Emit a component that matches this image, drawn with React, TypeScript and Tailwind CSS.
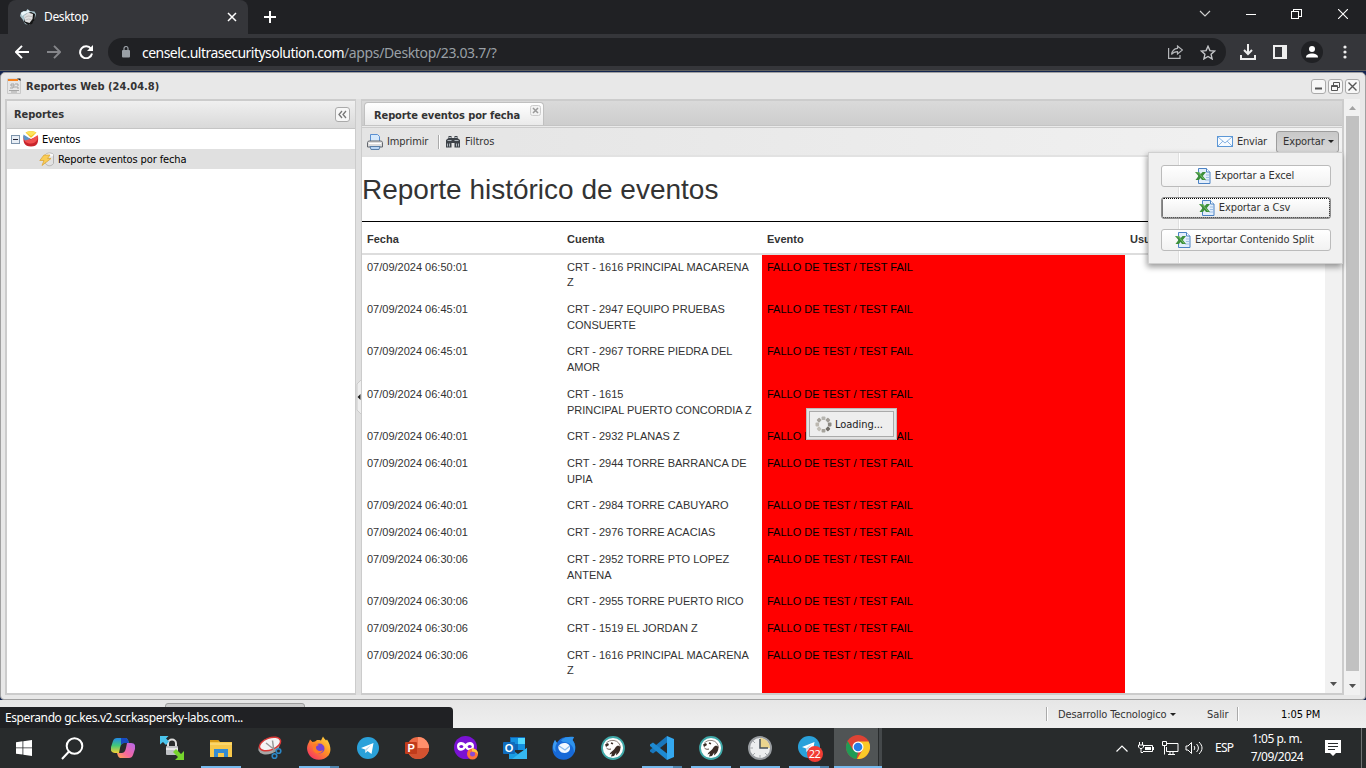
import React from "react";

type Row = { date: string; lines: string[] };

const rows: Row[] = [
  { date: "07/09/2024 06:50:01", lines: ["CRT - 1616 PRINCIPAL MACARENA", "Z"] },
  { date: "07/09/2024 06:45:01", lines: ["CRT - 2947 EQUIPO PRUEBAS", "CONSUERTE"] },
  { date: "07/09/2024 06:45:01", lines: ["CRT - 2967 TORRE PIEDRA DEL", "AMOR"] },
  { date: "07/09/2024 06:40:01", lines: ["CRT - 1615", "PRINCIPAL PUERTO CONCORDIA Z"] },
  { date: "07/09/2024 06:40:01", lines: ["CRT - 2932 PLANAS Z"] },
  { date: "07/09/2024 06:40:01", lines: ["CRT - 2944 TORRE BARRANCA DE", "UPIA"] },
  { date: "07/09/2024 06:40:01", lines: ["CRT - 2984 TORRE CABUYARO"] },
  { date: "07/09/2024 06:40:01", lines: ["CRT - 2976 TORRE ACACIAS"] },
  { date: "07/09/2024 06:30:06", lines: ["CRT - 2952 TORRE PTO LOPEZ", "ANTENA"] },
  { date: "07/09/2024 06:30:06", lines: ["CRT - 2955 TORRE PUERTO RICO"] },
  { date: "07/09/2024 06:30:06", lines: ["CRT - 1519 EL JORDAN Z"] },
  { date: "07/09/2024 06:30:06", lines: ["CRT - 1616 PRINCIPAL MACARENA", "Z"] },
];

function BrowserTabs() {
  return (
    <div className="flex h-[34px] shrink-0 bg-[#202124] text-white">
      <div className="ml-2 flex h-[34px] w-[240px] items-center rounded-t-lg bg-[#35363a] pr-[11px] pl-3">
        <svg width="16" height="16" viewBox="0 0 16 16">
          <path d="M1 3.500L3.500 2 6 2l1.500-2L10 2l4.500.5L16 5l-1 4-2 4-4 3-4-1-2-4L0 7z" fill="#a9c4cd" />
          <path d="M6 5l5-2 4 2-.5 6-2.500 4-4 1-4-3z" fill="#151515" />
          <path d="M4 7l4-3.500L13 5l-.5 5-3 4-4.500-1.500z" fill="#e0e0e0" />
          <path d="M5 8.500l3-1.500 4 .5M5.500 11l3-1 3 .5" stroke="#b4b4b4" fill="none" strokeWidth=".8" />
          <path d="M1 4l2.500-1.500 3 0L8 1l2 1.500-5 2.500L2 7z" fill="#ecf7fa" />
        </svg>
        <span className="ml-2 flex-1 text-[12px] tracking-[-0.35px]">Desktop</span>
        <svg width="10" height="10" viewBox="0 0 10 10" stroke="#fff" strokeWidth="1.500">
          <path d="M1 1l8 8M9 1l-8 8" />
        </svg>
      </div>
      <svg className="mt-[11px] ml-4" width="12" height="12" viewBox="0 0 12 12" stroke="#fff" strokeWidth="2">
        <path d="M6 0v12M0 6h12" />
      </svg>
      <div className="flex-1" />
      <svg className="mt-[10px] mr-[35px]" width="12" height="8" viewBox="0 0 12 8" fill="none" stroke="#d0d0d0" strokeWidth="1.200">
        <path d="M1 1l5 5 5-5" />
      </svg>
      <svg className="mt-[14px] mr-[35px]" width="10" height="1">
        <rect width="10" height="1" fill="#fff" />
      </svg>
      <svg className="mt-[9px] mr-9" width="11" height="10" viewBox="0 0 11 10" fill="none" stroke="#fff" shapeRendering="crispEdges">
        <path d="M.5 2.500h7v7h-7zM2.500 2.500v-2h7.500v7H8" />
      </svg>
      <svg className="mt-[9px] mr-[18px]" width="10" height="10" viewBox="0 0 10 10" stroke="#fff" strokeWidth="1.100">
        <path d="M0 0l10 10M10 0L0 10" />
      </svg>
    </div>
  );
}

function AddressBar() {
  return (
    <div className="flex h-[36px] shrink-0 items-center bg-[#35363a]">
      <svg className="ml-[15px]" width="14" height="14" viewBox="0 0 14 14" fill="none" stroke="#fff" strokeWidth="1.900">
        <path d="M14 7H1.500M7 .8L.9 7 7 13.200" />
      </svg>
      <svg className="ml-[18px]" width="14" height="14" viewBox="0 0 14 14" fill="none" stroke="#85868a" strokeWidth="1.900">
        <path d="M0 7h12.500M7 .8L13.100 7 7 13.200" />
      </svg>
      <svg className="ml-[18px]" width="14" height="14" viewBox="0 0 14 14" fill="none" stroke="#fff" strokeWidth="2">
        <path d="M12 3.800A6 6 0 1 0 13 8.500" />
        <path d="M14 0v6H8z" fill="#fff" stroke="none" />
      </svg>
      <div className="ml-[15px] flex h-7 w-[1118px] items-center rounded-full bg-[#202124] pr-[10px] pl-[14px]">
        <svg width="8" height="12" viewBox="0 0 8 12">
          <rect y="4" width="8" height="7.500" rx="1" fill="#9aa0a6" />
          <path d="M2 4V2.500a2 2 0 0 1 4 0V4" fill="none" stroke="#9aa0a6" strokeWidth="1.200" />
        </svg>
        <span className="ml-3 flex-1 text-[14px] whitespace-nowrap text-white">
          <span className="tracking-[-0.53px]">censelc.ultrasecuritysolution.com</span>
          <span className="tracking-[-0.36px] text-[#9aa0a6]">/apps/Desktop/23.03.7/?</span>
        </span>
        <svg className="mr-[17px]" width="15" height="14" viewBox="0 0 15 14" fill="none" stroke="#b4b6b9" strokeWidth="1.200">
          <path d="M.6 3v10.400h11.400V10" />
          <path d="M9.500 1l5 4-5 4V6.700C6.500 6.700 5 7.500 3.500 9.500 4 6.200 6 3.600 9.500 3.300z" />
        </svg>
        <svg width="16" height="15" viewBox="0 0 16 15" fill="none" stroke="#c4c6c9" strokeWidth="1.400">
          <path d="M8 1.300l1.900 4.300 4.700.5-3.500 3.200 1 4.600L8 11.500l-4.100 2.400 1-4.600L1.400 6.100l4.700-.5z" />
        </svg>
      </div>
      <svg className="ml-[14px]" width="16" height="16" viewBox="0 0 16 16" fill="none" stroke="#eee" strokeWidth="2">
        <path d="M8 0v10M4 6l4 4 4-4M1 11v4h14v-4" />
      </svg>
      <svg className="ml-[17px]" width="14" height="14" viewBox="0 0 14 14">
        <path d="M1 1h12v12H1z" fill="none" stroke="#eee" strokeWidth="2" />
        <path d="M9 1h4v12H9z" fill="#eee" />
      </svg>
      <svg className="ml-[14px]" width="22" height="22" viewBox="0 0 22 22">
        <circle cx="11" cy="11" r="11" fill="#202124" />
        <circle cx="11" cy="8" r="3" fill="#fff" />
        <path d="M5 16.500c0-3 3-4 6-4s6 1 6 4z" fill="#fff" />
      </svg>
      <svg className="ml-5" width="4" height="14" viewBox="0 0 4 14" fill="#eee">
        <circle cx="2" cy="2" r="1.600" />
        <circle cx="2" cy="7" r="1.600" />
        <circle cx="2" cy="12" r="1.600" />
      </svg>
    </div>
  );
}

function ToolBox({ children }: { children: React.ReactNode }) {
  return (
    <svg width="15" height="15" viewBox="0 0 15 15" fill="none">
      <rect x=".5" y=".5" width="14" height="14" rx="2.500" fill="#f7f7f7" stroke="#aaa" />
      {children}
    </svg>
  );
}

function Caret() {
  return (
    <svg width="6" height="3" viewBox="0 0 6 3">
      <path d="M0 0h6L3 3z" fill="#222" />
    </svg>
  );
}

function ExcelIcon() {
  return (
    <svg width="16" height="16" viewBox="0 0 16 16">
      <path d="M3.500.5h8l3.500 3.500v11.500H3.500z" fill="#e3eefb" stroke="#4b82c4" />
      <path d="M11.500.5V4H15" fill="#fff" stroke="#4b82c4" />
      <path d="M11 7h3M11 9.500h3M10 12h4" stroke="#9dbfe6" />
      <path d="M0 4h4l1.800 2L7.500 4H11L7.800 8l3.200 4H7L5.500 10 4 12H.5l3-4z" fill="#3c8f3b" />
      <path d="M1.500 4.700h2l5.500 6.500" stroke="#8acb79" fill="none" strokeWidth=".8" />
    </svg>
  );
}

function ExportButton({ label, focused }: { label: string; focused?: boolean }) {
  return (
    <div
      className={
        focused
          ? "flex h-[22px] items-center justify-center rounded-[3px] border border-[#8e8e8e] bg-linear-to-b from-white to-[#ececec] pr-[3px] outline-1 -outline-offset-2 outline-dotted outline-black"
          : "flex h-[22px] items-center justify-center rounded-[3px] border border-[#bbb] bg-linear-to-b from-white to-[#f2f2f2] pr-[3px]"
      }
    >
      <ExcelIcon />
      <span className="ml-1 pt-px whitespace-nowrap">{label}</span>
    </div>
  );
}

function ExportMenu() {
  return (
    <div className="absolute top-[51px] right-[-1px] flex h-[112px] w-[195px] flex-col border border-[#d0d0d0] bg-[#f0f0f0] pt-3 pr-[11px] pl-3 text-[11px] tracking-[-0.1px] text-[#333] shadow-[-1px_3px_6px_rgba(0,0,0,0.4)]">
      <div className="absolute top-0 left-[29px] h-full w-[2px] border-l border-[#e0e0e0] bg-white" />
      <div className="relative flex flex-col gap-[10px]">
        <ExportButton label="Exportar a Excel" />
        <ExportButton label="Exportar a Csv" focused />
        <ExportButton label="Exportar Contenido Split" />
      </div>
    </div>
  );
}

function TitleBar() {
  return (
    <div className="flex h-[26px] shrink-0 items-center pl-[2px]">
      <svg width="14" height="16" viewBox="0 0 14 16">
        <path d="M.5 1h13v14.500H.5z" fill="#e6e6e6" stroke="#c9c9c9" />
        <path d="M1 1h10v2H1z" fill="#f58220" />
        <path d="M10 .5h3.500V3z" fill="#222" />
        <path d="M4 6h3v2H4zM8 6h3v2M3 10h3v-1h5v2M2 12.500h10M4 14h6" stroke="#a5a5a5" fill="none" />
      </svg>
      <span className="ml-[5px] flex-1 pt-[2px] text-[11px] font-bold tracking-[0.03px] text-[#333]">Reportes Web (24.04.8)</span>
      <div className="flex gap-[2px]">
        <ToolBox>
          <path d="M4 9.500h7" stroke="#555" strokeWidth="2" />
        </ToolBox>
        <ToolBox>
          <path d="M5.500 6.500v-3h6v5h-2M3.500 6.500h6v5h-6zM3.500 7.500h6" stroke="#555" />
        </ToolBox>
        <ToolBox>
          <path d="M3.500 3.500l8 8M11.500 3.500l-8 8" stroke="#555" strokeWidth="1.400" />
        </ToolBox>
      </div>
    </div>
  );
}

function Sidebar() {
  return (
    <div className="flex w-[351px] shrink-0 flex-col border-2 border-r-1 border-[#ccc] bg-white">
      <div className="flex h-[28px] shrink-0 items-center justify-between border-b border-[#c5c5c5] bg-linear-to-b from-[#f0f0f0] to-[#d9d9d9] pr-[5px] pl-[7px]">
        <span className="pt-px text-[11px] font-bold tracking-[-0.05px] text-[#333]">Reportes</span>
        <ToolBox>
          <path d="M7 4L4 7.500 7 11M11 4L8 7.500 11 11" stroke="#777" strokeWidth="1.300" />
        </ToolBox>
      </div>
      <div className="flex h-5 items-center pl-1 text-[11px] tracking-[-0.2px] text-black">
        <svg width="9" height="9" viewBox="0 0 9 9">
          <rect x=".5" y=".5" width="8" height="8" fill="#e8eef5" stroke="#7c93ab" />
          <path d="M2 4.500h5" stroke="#223" />
        </svg>
        <svg className="ml-[3px]" width="16" height="16" viewBox="0 0 16 16">
          <path d="M.5 5C0 11 1 15.500 8 15.500S15.500 11 15 5L8 8z" fill="#c9252c" />
          <path d="M1 7l7 1.500L14.800 4c.5 4-1.500 8.500-6.800 8.500S1 10 1 7z" fill="#f0504f" />
          <path d="M.5 3.500L7.500 8 2 9.500C.5 8 0 6.500.5 3.500z" fill="#5b93c9" />
          <path d="M2.500 1.500C5-.3 11-.3 13.500 1.500L8.500 6.500H7.500z" fill="#f4c320" />
          <path d="M3 1.500C5.500.2 10.500.2 13 1.500L8 5z" fill="#fde35e" />
        </svg>
        <span className="ml-[3px] pt-[2px]">Eventos</span>
      </div>
      <div className="flex h-5 items-center bg-[#e0e0e0] pl-[32px] text-[11px] tracking-[-0.12px] text-black">
        <svg width="16" height="15" viewBox="0 0 16 15">
          <path d="M6.500 2.500c2-2 6-2 8 0v9c-2 3-6 3-8 0z" fill="#e2e2e2" stroke="#b3b3b3" />
          <ellipse cx="10.500" cy="3" rx="3.800" ry="1.500" fill="#fafafa" />
          <path d="M5 3h6L8.500 6.500H12L3 13.500l2-5H.8z" fill="#f9cd57" stroke="#dba63a" strokeWidth=".8" />
        </svg>
        <span className="ml-[3px] pt-[2px] whitespace-nowrap">Reporte eventos por fecha</span>
      </div>
    </div>
  );
}

function ReportToolbar() {
  return (
    <div className="flex h-[29px] shrink-0 items-center border-b-2 border-[#e2e2e2] bg-linear-to-r from-[#e4e4e4] to-[#f2f2f2] pr-[3px] pl-[5px] text-[11px] tracking-[-0.1px] text-[#333]">
      <svg width="16" height="16" viewBox="0 0 16 16">
        <path d="M3.500 8V.5h7l2 2V8z" fill="#d6e9fc" stroke="#5a8fd0" />
        <path d="M1.500 7h13l1 1.500v4.500H.5V8.500z" fill="#ddd" stroke="#63676d" />
        <path d="M3 12.500h10l-1 3H4z" fill="#b9d6f5" stroke="#5a7fa8" />
        <path d="M2 9.500h12" stroke="#fff" />
      </svg>
      <span className="ml-1 w-[42px] pt-px">Imprimir</span>
      <div className="ml-[9px] h-[14px] w-[2px] border-r border-white bg-[#aaa]" />
      <svg className="ml-[6px]" width="14" height="13" viewBox="0 0 14 13">
        <path d="M2.500 1h3v2h3V1h3v2L14 5v7.500H8.500V8h-3v4.500H0V5l2.500-2z" fill="#3d4248" />
        <path d="M1.500 5.500h4M8.500 5.500h4M3 2.500h2M9 2.500h2M1.500 8.500v3M3.500 8.500v3M10.500 8.500v3M12.500 8.500v3" stroke="#aeb6bd" />
      </svg>
      <span className="ml-[5px] flex-1 pt-px tracking-[0.02px]">Filtros</span>
      <svg width="16" height="11" viewBox="0 0 16 11">
        <rect x=".5" y=".5" width="15" height="10" fill="#f7fbff" stroke="#5c97d6" />
        <path d="M1 1l7 6 7-6M1 10l5-5M15 10l-5-5" fill="none" stroke="#8ab4e2" />
      </svg>
      <span className="ml-1 w-[39px] pt-px tracking-[-0.25px]">Enviar</span>
      <div className="flex h-[22px] w-[63px] items-center rounded-[3px] border border-[#9d9d9d] bg-linear-to-b from-[#c8c8c8] to-[#d9d9d9] pl-[6px]">
        <span className="mr-[2px] w-[43px] pt-px">Exportar</span>
        <Caret />
      </div>
    </div>
  );
}

function Report() {
  return (
    <div className="flex min-h-0 flex-1 bg-white font-['Liberation_Sans',Arial,sans-serif]">
      <div className="flex min-w-0 flex-1 flex-col overflow-hidden">
        <h1 className="mt-4 h-[48px] shrink-0 text-[28px] leading-[34px] text-[#333]">Reporte histórico de eventos</h1>
        <div className="grid h-[34px] shrink-0 grid-cols-[200px_200px_363px_1fr] items-center border-t border-b-2 border-t-black border-b-[#ddd] pt-1 text-[11px] font-bold text-[#333]">
          <span className="pl-[5px]">Fecha</span>
          <span className="pl-[5px]">Cuenta</span>
          <span className="pl-[5px]">Evento</span>
          <span className="pl-[5px]">Usuario</span>
        </div>
        {rows.map((r, i) => (
          <div key={i} className="grid shrink-0 grid-cols-[200px_200px_363px_1fr] text-[11px] leading-[15.714px] text-[#333]">
            <span className="px-[5px] pt-[4.65px] pb-[6.35px]">{r.date}</span>
            <span className="px-[5px] pt-[4.65px] pb-[6.35px] whitespace-nowrap">
              {r.lines.map((l) => (
                <span key={l} className="block">{l}</span>
              ))}
            </span>
            <span className="bg-[#ff0000] px-[5px] pt-[4.65px] pb-[6.35px] text-black">FALLO DE TEST / TEST FAIL</span>
          </div>
        ))}
        <div className="ml-[400px] w-[363px] flex-1 bg-[#ff0000]" />
      </div>
      <div className="flex w-[17px] shrink-0 flex-col justify-end bg-[#f1f1f1] pb-[7px] pl-[5px]">
        <svg width="7" height="4" viewBox="0 0 7 4">
          <path d="M0 0h7L3.500 4z" fill="#505050" />
        </svg>
      </div>
    </div>
  );
}

function MainPanel() {
  return (
    <div className="relative flex min-w-0 flex-1 flex-col border-2 border-l-1 border-[#ccc]">
      <div className="flex h-[25px] shrink-0 items-end border-b border-[#c4c4c4] bg-linear-to-b from-[#dadada] to-[#cdcdcd] pl-[2px]">
        <div className="flex h-[23px] w-[180px] rounded-t-[4px] border border-b-0 border-[#c0c0c0] bg-linear-to-b from-white to-[#eaeaea] pl-[9px]">
          <span className="flex-1 pt-[5px] text-[11px] leading-4 font-bold tracking-[-0.1px] whitespace-nowrap text-[#333]">Reporte eventos por fecha</span>
          <svg className="mt-[2px] mr-[2px]" width="11" height="11" viewBox="0 0 11 11">
            <rect x=".5" y=".5" width="10" height="10" rx="2" fill="#f2f2f2" stroke="#ccc" />
            <path d="M3 3l5 5M8 3L3 8" stroke="#999" strokeWidth="1.500" />
          </svg>
        </div>
      </div>
      <div className="h-[2px] shrink-0 border-b border-[#ccc] bg-[#eaeaea]" />
      <ReportToolbar />
      <Report />
      <ExportMenu />
      <div className="absolute top-[307px] left-[444px] h-[32px] w-[91px] border border-[#bbb] bg-[#e2e2e2] p-[2px]">
        <div className="flex h-full items-center border border-[#aaa] bg-[#eee] pl-[5px]">
          <svg width="17" height="17" viewBox="-8.500 -8.500 17 17">
            {[0, 45, 90, 135, 180, 225, 270, 315].map((a, i) => (
              <rect key={a} x="-1.900" y="-8" width="3.800" height="3.600" rx=".8" transform={`rotate(${a})`} fill={["#b5b4af", "#a09d97", "#8c8983", "#716e68", "#a5a29b", "#c2bfb7", "#bcb8b0", "#a5a29b"][i]} />
            ))}
          </svg>
          <span className="ml-[3px] pt-[2px] text-[11px] tracking-[-0.05px] text-[#222]">Loading...</span>
        </div>
      </div>
    </div>
  );
}

function DesktopWindow() {
  return (
    <div className="flex h-[628px] shrink-0 flex-col rounded-t-[5px] rounded-b-[4px] border border-[#a0a0a0] bg-[#e8e8e8] pr-[5px] pl-[4px] font-['DejaVu_Sans_Condensed','Noto_Sans',sans-serif]">
      <TitleBar />
      <div className="flex h-[596px] shrink-0">
        <Sidebar />
        <div className="flex w-[5px] shrink-0 items-center bg-[#e0e0e0]">
          <svg width="5" height="36" viewBox="0 0 5 36">
            <path d="M5 1L1 5v26l4 4" fill="#eee" stroke="#ccc" />
            <path d="M4.500 15v6L1.500 18z" fill="#222" />
          </svg>
        </div>
        <MainPanel />
        <div className="flex w-[16px] shrink-0 flex-col items-center bg-[#f1f1f1]">
          <svg className="mt-[7px] mb-[6px]" width="7" height="4" viewBox="0 0 7 4">
            <path d="M0 4h7L3.500 0z" fill="#a3a3a3" />
          </svg>
          <div className="h-[555px] w-[13px] bg-[#c1c1c1]" />
          <svg className="mt-[13px]" width="7" height="4" viewBox="0 0 7 4">
            <path d="M0 0h7L3.500 4z" fill="#505050" />
          </svg>
        </div>
      </div>
    </div>
  );
}

function StatusBar() {
  return (
    <div className="relative flex h-[28px] shrink-0 items-center bg-linear-to-b from-[#e6e6e6] to-[#efefef] font-['DejaVu_Sans_Condensed','Noto_Sans',sans-serif] text-[11px] tracking-[-0.1px] text-[#333]">
      <div className="absolute top-[3px] left-[165px] h-[10px] w-[140px] rounded-t-[3px] border border-[#9d9d9d] bg-[#ccc]" />
      <div className="relative mt-[7px] flex h-[21px] w-[453px] items-center rounded-tr-[4px] bg-[#202124] pl-[5px] font-['Noto_Sans',sans-serif] text-[12px] tracking-[-0.4px] text-white">
        Esperando gc.kes.v2.scr.kaspersky-labs.com...
      </div>
      <div className="flex-1" />
      <div className="h-[14px] w-[2px] border-r border-white bg-[#aaa]" />
      <span className="ml-[10px] w-[112px] pt-[2px] whitespace-nowrap">Desarrollo Tecnologico</span>
      <Caret />
      <span className="ml-[31px] w-[30px] pt-[2px]">Salir</span>
      <div className="h-[14px] w-[2px] border-r border-white bg-[#aaa]" />
      <span className="mr-[45px] ml-[42px] w-[40px] pt-[2px] whitespace-nowrap text-black">1:05 PM</span>
    </div>
  );
}

type TaskProps = { children: React.ReactNode; open?: boolean; stacked?: boolean };

function Task({ children, open, stacked }: TaskProps) {
  return (
    <div className="relative flex h-10 w-[49px] shrink-0 items-center justify-center">
      {children}
      {open && (
        <div className="absolute bottom-0 left-[5px] flex h-[2px] w-10">
          <div className="flex-1 bg-[#76b9ed]" />
          {stacked && <div className="w-[9px] bg-[#4f84ad]" />}
        </div>
      )}
    </div>
  );
}

function TelegramIcon() {
  return (
    <svg width="22" height="22" viewBox="0 0 22 22">
      <circle cx="11" cy="11" r="11" fill="#2aa1da" />
      <path d="M4 11l12.500-5-2 11-4-3-2 2-.5-3.500z" fill="#fff" />
      <path d="M8 12.500L14 8l-4.500 5.500-1 2.500z" fill="#b9d8ea" />
    </svg>
  );
}

function BeaverIcon() {
  return (
    <svg width="24" height="24" viewBox="0 0 24 24">
      <circle cx="12" cy="12" r="11" fill="#fff" stroke="#3fa8a8" strokeWidth="1.800" />
      <path d="M5 7.500C7 5 10 4 13 4.500c4 .5 6 3.500 6.500 7" fill="none" stroke="#5b4a42" strokeWidth=".7" />
      <path d="M4 8.500l3-1.500 1 2-3 2z" fill="#3b2c26" />
      <path d="M10 7l2 .8" stroke="#3b2c26" strokeWidth="1.500" />
      <path d="M16 10c1.500-.5 3 0 3.500 1.500 0 3.500-2 6.500-4.500 8l.3-3-2.300 3.500-3 .5 1-3-2.500 1c.8-2.500 2.500-3 4-4.500s2-3 3.500-4z" fill="#3b2c26" />
      <path d="M5.500 12c1.500 1.500 3 1.500 4.500 1" fill="none" stroke="#5b4a42" />
    </svg>
  );
}

function FirefoxIcon() {
  return (
    <svg width="24" height="24" viewBox="0 0 24 24">
      <defs>
        <linearGradient id="fx" x1="1" y1="0" x2=".1" y2="1">
          <stop offset="0" stopColor="#ffe44a" />
          <stop offset=".45" stopColor="#ff9324" />
          <stop offset="1" stopColor="#f5286b" />
        </linearGradient>
      </defs>
      <path d="M2 6l1-2.500L5.500 6 8 5.500 10 4c2 0 3 0 4 .5L16 .5c1 2 2 2.500 3 4l1-1c4 6 4.500 11.500 1.500 16C17 25 7 25 3 20-1 15-.5 10 2 6z" fill="url(#fx)" />
      <circle cx="12.500" cy="12.500" r="5" fill="#7542d4" />
      <path d="M6 9c2-2 4-1 6 0-2 .5-3 1-3 2.500 0 3 4 4.500 7 2.500-1 4-8 5-10 0z" fill="#ff7b27" />
    </svg>
  );
}

function Taskbar() {
  return (
    <div className="flex h-10 shrink-0 items-center bg-[#282b2c] text-white">
      <Task>
        <svg className="mr-px" width="16" height="16" viewBox="0 0 16 16" fill="#fff">
          <path d="M0 2.200l6.500-.9v6.200H0zM7.300 1.200L16 0v7.500H7.300zM0 8.300h6.500v6.300L0 13.700zM7.300 8.300H16V16l-8.700-1.200z" />
        </svg>
      </Task>
      <Task>
        <svg className="mr-[3px]" width="23" height="23" viewBox="0 0 23 23" fill="none" stroke="#fff" strokeWidth="2">
          <circle cx="13.500" cy="9" r="7.800" />
          <path d="M8 14.500L1 22" />
        </svg>
      </Task>
      <Task>
        <svg width="24" height="22" viewBox="0 0 24 22">
          <defs>
            <linearGradient id="cpA" x1="0" y1="0" x2="0" y2="1">
              <stop offset="0" stopColor="#2389e8" />
              <stop offset=".5" stopColor="#42c878" />
              <stop offset="1" stopColor="#f4d033" />
            </linearGradient>
            <linearGradient id="cpB" x1="1" y1="0" x2="0" y2="1">
              <stop offset="0" stopColor="#b468ef" />
              <stop offset=".6" stopColor="#f5679e" />
              <stop offset="1" stopColor="#ffad48" />
            </linearGradient>
          </defs>
          <path d="M6 1h8c2 0 3 1 4 5h-4c-3 0-4 1-5 5l-1 5H4c-3 0-5-2-4-6l2-6c.700-2 2-3 4-3z" fill="url(#cpA)" />
          <path d="M18 21h-8c-2 0-3-1-4-5h4c3 0 4-1 5-5l1-5h4c3 0 5 2 4 6l-2 6c-.7 2-2 3-4 3z" fill="url(#cpB)" />
          <path d="M10 1h4c2 0 3 1 4 5h-4c-2 0-3 .5-4 2z" fill="#174ac2" />
        </svg>
      </Task>
      <Task>
        <svg width="24" height="24" viewBox="0 0 24 24">
          <path d="M8 11V7.500a4 4 0 0 1 8 0V11" fill="none" stroke="#ddd" strokeWidth="2" />
          <rect x="6" y="10" width="12" height="9" rx="1" fill="#bfc2c5" />
          <path d="M6 13h12" stroke="#e8e8e8" strokeWidth="2" />
          <path d="M0 0h8.500L6 2.500 9 5.500 6 9 3 6 0 8.500z" fill="#4bc5ed" />
          <path d="M24 24h-9l3-3-5-5 3-3 5 5 3-3z" fill="#76d52d" />
        </svg>
      </Task>
      <Task open>
        <svg width="22" height="19" viewBox="0 0 22 19">
          <path d="M0 1h8l2 2h12v15H0z" fill="#f7c84b" />
          <path d="M0 1h8l1 2H0z" fill="#d99b16" />
          <path d="M4 10h14v8h-4v-4H8v4H4z" fill="#338bd3" />
          <path d="M0 5h22" stroke="#ffe38d" />
        </svg>
      </Task>
      <Task>
        <svg width="24" height="24" viewBox="0 0 24 24">
          <ellipse cx="11" cy="11" rx="11" ry="7" transform="rotate(-20 11 11)" fill="#a7a7a7" />
          <ellipse cx="12" cy="8" rx="11" ry="6" transform="rotate(-20 12 8)" fill="#f4f4f4" stroke="#d93836" strokeWidth="1.500" />
          <path d="M8 7l10 8M14.500 4.500L16 16" stroke="#999" strokeWidth="1.500" />
          <circle cx="20.500" cy="15" r="2.300" fill="none" stroke="#2b86c5" strokeWidth="1.600" />
          <circle cx="16.500" cy="20" r="2.300" fill="none" stroke="#2b86c5" strokeWidth="1.600" />
        </svg>
      </Task>
      <Task open stacked>
        <FirefoxIcon />
      </Task>
      <Task>
        <TelegramIcon />
      </Task>
      <Task>
        <svg width="24" height="22" viewBox="0 0 24 22" className="font-['Liberation_Sans',sans-serif]">
          <circle cx="13" cy="11" r="11" fill="#ed6c47" />
          <path d="M13 0a11 11 0 0 1 11 11H13z" fill="#ff8f6b" />
          <path d="M2 11h22a11 11 0 0 1-22 0z" fill="#d35230" />
          <rect y="5" width="12" height="12" rx="1" fill="#c13b1b" />
          <text x="2.500" y="15" fontSize="11" fontWeight="700" fill="#fff">P</text>
        </svg>
      </Task>
      <Task>
        <svg width="24" height="24" viewBox="0 0 24 24">
          <circle cx="11.500" cy="11.500" r="11.500" fill="#7a12d4" />
          <path d="M3 10c0-5 6-5 8.500-2C14 5 20 5 20 10c0 6-6 6-8.500 2C9 16 3 16 3 10z" fill="#fff" />
          <ellipse cx="7.300" cy="10.500" rx="2" ry="1.600" fill="#7a12d4" />
          <ellipse cx="15.700" cy="10.500" rx="2" ry="1.600" fill="#7a12d4" />
          <circle cx="18.500" cy="18" r="5.500" fill="#ff7139" />
          <circle cx="18.500" cy="18" r="2.500" fill="#8a4bd4" />
          <path d="M18 12.500c3-.5 6 2 6 6-1-2-3-3-6-3z" fill="#ffcb3d" />
        </svg>
      </Task>
      <Task>
        <svg width="24" height="22" viewBox="0 0 24 22" className="font-['Liberation_Sans',sans-serif]">
          <path d="M7 0h15v13H7z" fill="#1066b5" />
          <path d="M15 1h7v6h-7z" fill="#50d9ff" />
          <path d="M8 1h7v6H8z" fill="#1490df" />
          <path d="M15 7h7v6h-7z" fill="#1490df" />
          <path d="M6 11l9 6 9-6v11H6z" fill="#1b9de2" />
          <path d="M24 11L9 22h15z" fill="#35b8f1" />
          <rect y="5" width="12" height="12" rx="1" fill="#0f6cbd" />
          <text x="1.700" y="15" fontSize="11" fontWeight="700" fill="#fff">O</text>
        </svg>
      </Task>
      <Task>
        <svg width="24" height="24" viewBox="0 0 24 24">
          <path d="M3 4l2 3C7 3 11 1 15 1h7l-1.500 3C24 8 24.500 14 21 19c-4 6-13 6.500-18 1C-.5 15.500-.5 9 3 4z" fill="#1769d7" />
          <path d="M9 4.500C12 1 17 .5 22 1l-1.500 3c3 4 3.500 8.500 1.500 13 0-7-4-11-11-11z" fill="#2f93ec" />
          <path d="M3 4l2 3c-2 3-2 6-1 9-2-1-3-3-3-5C1 8 2 6 3 4z" fill="#3d9cf0" />
          <path d="M6.500 10C8 7.500 11 6.500 13.500 7c3 .5 5 3 4.500 6-.5 2.500-3 4-5.500 4C8.500 17 5.500 13.500 6.500 10z" fill="#f1f8ff" />
          <path d="M7 10l6 4 4.800-4" fill="none" stroke="#8bbcec" strokeWidth="1.300" />
        </svg>
      </Task>
      <Task>
        <BeaverIcon />
      </Task>
      <Task open stacked>
        <svg width="24" height="24" viewBox="0 0 24 24">
          <path d="M17 0v6.500L3 17.500 0 15.500v-1.500z" fill="#1977bd" />
          <path d="M17 24v-6.500L3 6.500 0 8.500v1.500z" fill="#1e8ad2" />
          <path d="M17 0l7 3v18l-7 3z" fill="#34a8f0" />
        </svg>
      </Task>
      <Task open>
        <BeaverIcon />
      </Task>
      <Task open>
        <svg width="24" height="24" viewBox="0 0 24 24">
          <circle cx="12" cy="12" r="11" fill="#eceeef" stroke="#999da1" strokeWidth="2" />
          <path d="M12 12V2a10 10 0 0 1 10 10z" fill="#ead48d" />
          <path d="M12 3v9h8" stroke="#45505a" strokeWidth="1.500" fill="none" />
          <path d="M12 19v3M2 12h3M5 5l2 2M5 19l2-2M19 19l-2-2" stroke="#a5a9ac" />
        </svg>
      </Task>
      <Task open stacked>
        <div className="relative -top-px">
          <TelegramIcon />
          <div className="absolute top-[10px] left-[9px] flex h-4 w-4 items-center justify-center rounded-full bg-[#f23c34] text-[11px] tracking-[-0.5px]">22</div>
        </div>
      </Task>
      <div className="ml-px flex h-10 w-[48px] shrink-0 border-b-2 border-[#76b9ed]">
        <div className="flex w-[44px] items-center justify-center bg-[#505455] pl-[3px]">
          <svg width="24" height="24" viewBox="0 0 24 24">
            <circle cx="12" cy="12" r="12" fill="#de4334" />
            <path d="M1.600 6L7 15l5 2.500L10.500 24A12 12 0 0 1 1.600 6z" fill="#209b55" />
            <path d="M12 6.500h10.600A12 12 0 0 1 11 24l5.500-9z" fill="#fbc928" />
            <circle cx="12" cy="12" r="5.500" fill="#fff" />
            <circle cx="12" cy="12" r="4.300" fill="#287ee8" />
          </svg>
        </div>
        <div className="ml-px w-[3px] bg-[#44484a]" />
      </div>
      <div className="flex-1" />
      <svg width="12" height="7" viewBox="0 0 12 7" fill="none" stroke="#fff" strokeWidth="1.200">
        <path d="M.5 6.500L6 1l5.500 5.500" />
      </svg>
      <svg className="ml-[10px]" width="16" height="12" viewBox="0 0 16 12" fill="none" stroke="#fff">
        <path d="M6 3.500h8.500v6H5M15.500 5v3" />
        <path d="M7 5h6v3H7z" fill="#fff" stroke="none" />
        <path d="M1.500 0v3M4.500 0v3M.5 3h5v2L4 6.500H2L.5 5zM3 6v4.500h2" />
      </svg>
      <svg className="ml-2" width="17" height="14" viewBox="0 0 17 14" fill="none" stroke="#fff">
        <path d="M5 2.500h11v8H4.500V6M.5.500h4v4h-4zM2.500 4.500v9M8 10.500v3M6 13.500h7M11 10.500v3" />
      </svg>
      <svg className="ml-[6px]" width="18" height="14" viewBox="0 0 18 14" fill="none" stroke="#fff">
        <path d="M1 5h2l3.500-3.500v11L3 9H1zM9 5c1 1 1 3 0 4M11.500 3c2.500 2.500 2.500 5.500 0 8M14 1c4 4 4 8 0 12" />
      </svg>
      <span className="ml-[12px] w-[19px] text-[12px] tracking-[-0.7px]">ESP</span>
      <div className="ml-[9px] flex w-[68px] flex-col items-center text-[12px] leading-[18px] tracking-[-0.5px] whitespace-nowrap">
        <span>1:05 p. m.</span>
        <span>7/09/2024</span>
      </div>
      <svg className="mr-[20px] ml-[14px]" width="16" height="16" viewBox="0 0 16 16">
        <path d="M0 0h16v13h-5l-3 3-3-3H0z" fill="#fff" />
        <path d="M3 3.500h10M3 6.500h10M3 9.500h7" stroke="#282b2c" />
      </svg>
      <div className="mr-1 h-10 w-px bg-[#707273]" />
    </div>
  );
}

export default function App() {
  return (
    <div className="flex h-[768px] w-[1366px] flex-col overflow-hidden bg-[#132550] font-['Noto_Sans','Open_Sans',sans-serif]">
      <BrowserTabs />
      <AddressBar />
      <div className="mb-px h-px shrink-0 bg-[#5d5d5b]" />
      <DesktopWindow />
      <StatusBar />
      <Taskbar />
    </div>
  );
}
